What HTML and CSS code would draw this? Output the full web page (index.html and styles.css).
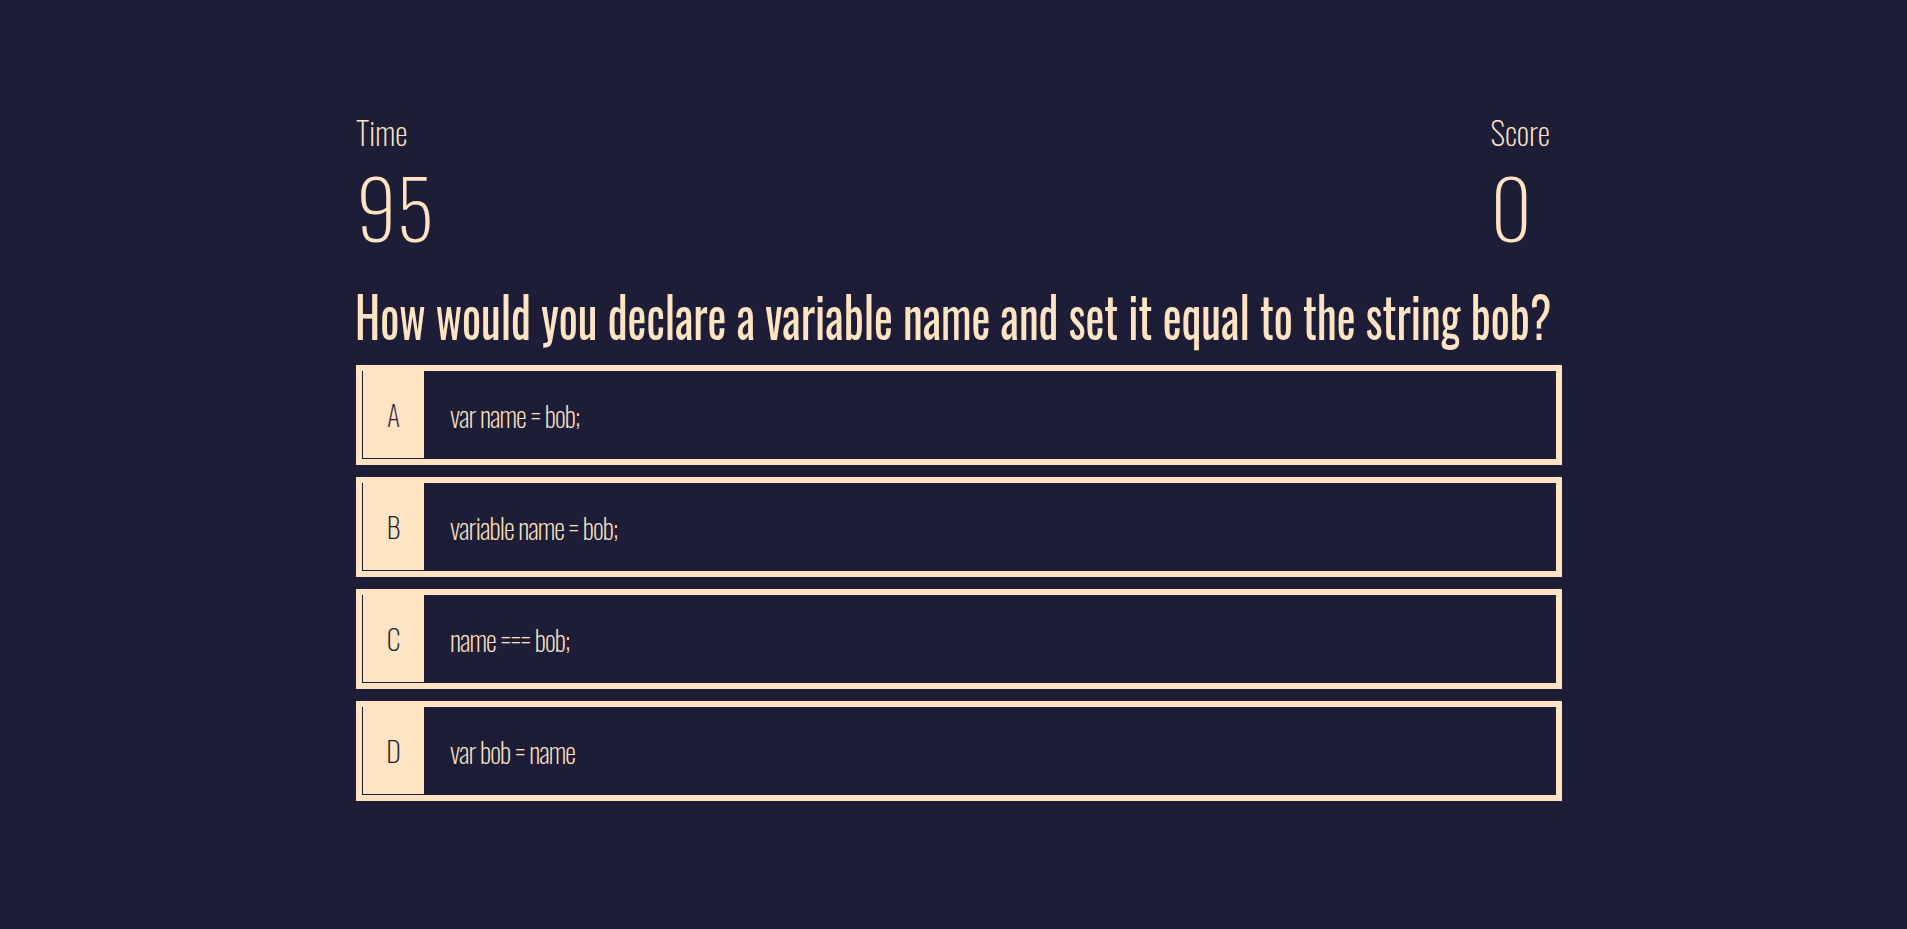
FILE: index.html
```html
<!DOCTYPE html>
<html lang="en">
<head>
<meta charset="utf-8">
<title>Code Quiz</title>
<link rel="stylesheet" href="styles.css">
</head>
<body>
<main class="quiz">
  <header class="stats">
    <div class="stat">
      <div class="stat-label">Time</div>
      <div class="stat-value">95</div>
    </div>
    <div class="stat stat-right">
      <div class="stat-label">Score</div>
      <div class="stat-value">0</div>
    </div>
  </header>
  <h1 class="question">How would you declare a variable name and set it equal to the string bob?</h1>
  <div class="choices">
    <button class="choice"><span class="choice-letter">A</span><span class="choice-text">var name = bob;</span></button>
    <button class="choice"><span class="choice-letter">B</span><span class="choice-text">variable name = bob;</span></button>
    <button class="choice"><span class="choice-letter">C</span><span class="choice-text">name === bob;</span></button>
    <button class="choice"><span class="choice-letter">D</span><span class="choice-text">var bob = name</span></button>
  </div>
</main>
</body>
</html>
```
FILE: styles.css
```css
* { box-sizing: border-box; }
html, body { margin: 0; padding: 0; }
body {
  background: #1e1d37;
  color: #ffe4c4;
  font-family: "Oswald", "Roboto Condensed", "Liberation Sans", sans-serif;
  font-weight: 200;
  min-height: 929px;
  overflow-x: hidden;
}
.quiz {
  width: 1206px;
  margin-left: 356px;
  padding-top: 112px;
}
.stats {
  display: flex;
  justify-content: space-between;
  padding-right: 12px;
}
.stat-label {
  font-size: 32px;
  line-height: 40px;
}
.stat-value {
  font-size: 80px;
  line-height: 100px;
  margin-top: 4px;
}
.question {
  font-size: 56px;
  font-weight: 400;
  line-height: 70px;
  white-space: nowrap;
  margin: 24px 0 15px -1px;
  transform: scaleX(0.80);
  transform-origin: 0 50%;
}
.choices {
  display: flex;
  flex-direction: column;
  gap: 12px;
}
.choice {
  display: flex;
  align-items: stretch;
  height: 100px;
  width: 100%;
  padding: 0;
  margin: 0;
  background: #1e1d37;
  border: 6px solid #ffe4c4;
  color: #ffe4c4;
  font-family: inherit;
  font-weight: 200;
  text-align: left;
  cursor: pointer;
}
.choice-letter {
  width: 62px;
  flex: none;
  display: flex;
  align-items: center;
  justify-content: center;
  background: #ffe4c4;
  color: #1e1d37;
  border-left: 1px solid #1e1d37;
  border-bottom: 1px solid #1e1d37;
  font-size: 28px;
}
.choice-text {
  display: flex;
  align-items: center;
  padding-left: 26px;
  font-size: 28px;
  letter-spacing: -0.9px;
}
```
